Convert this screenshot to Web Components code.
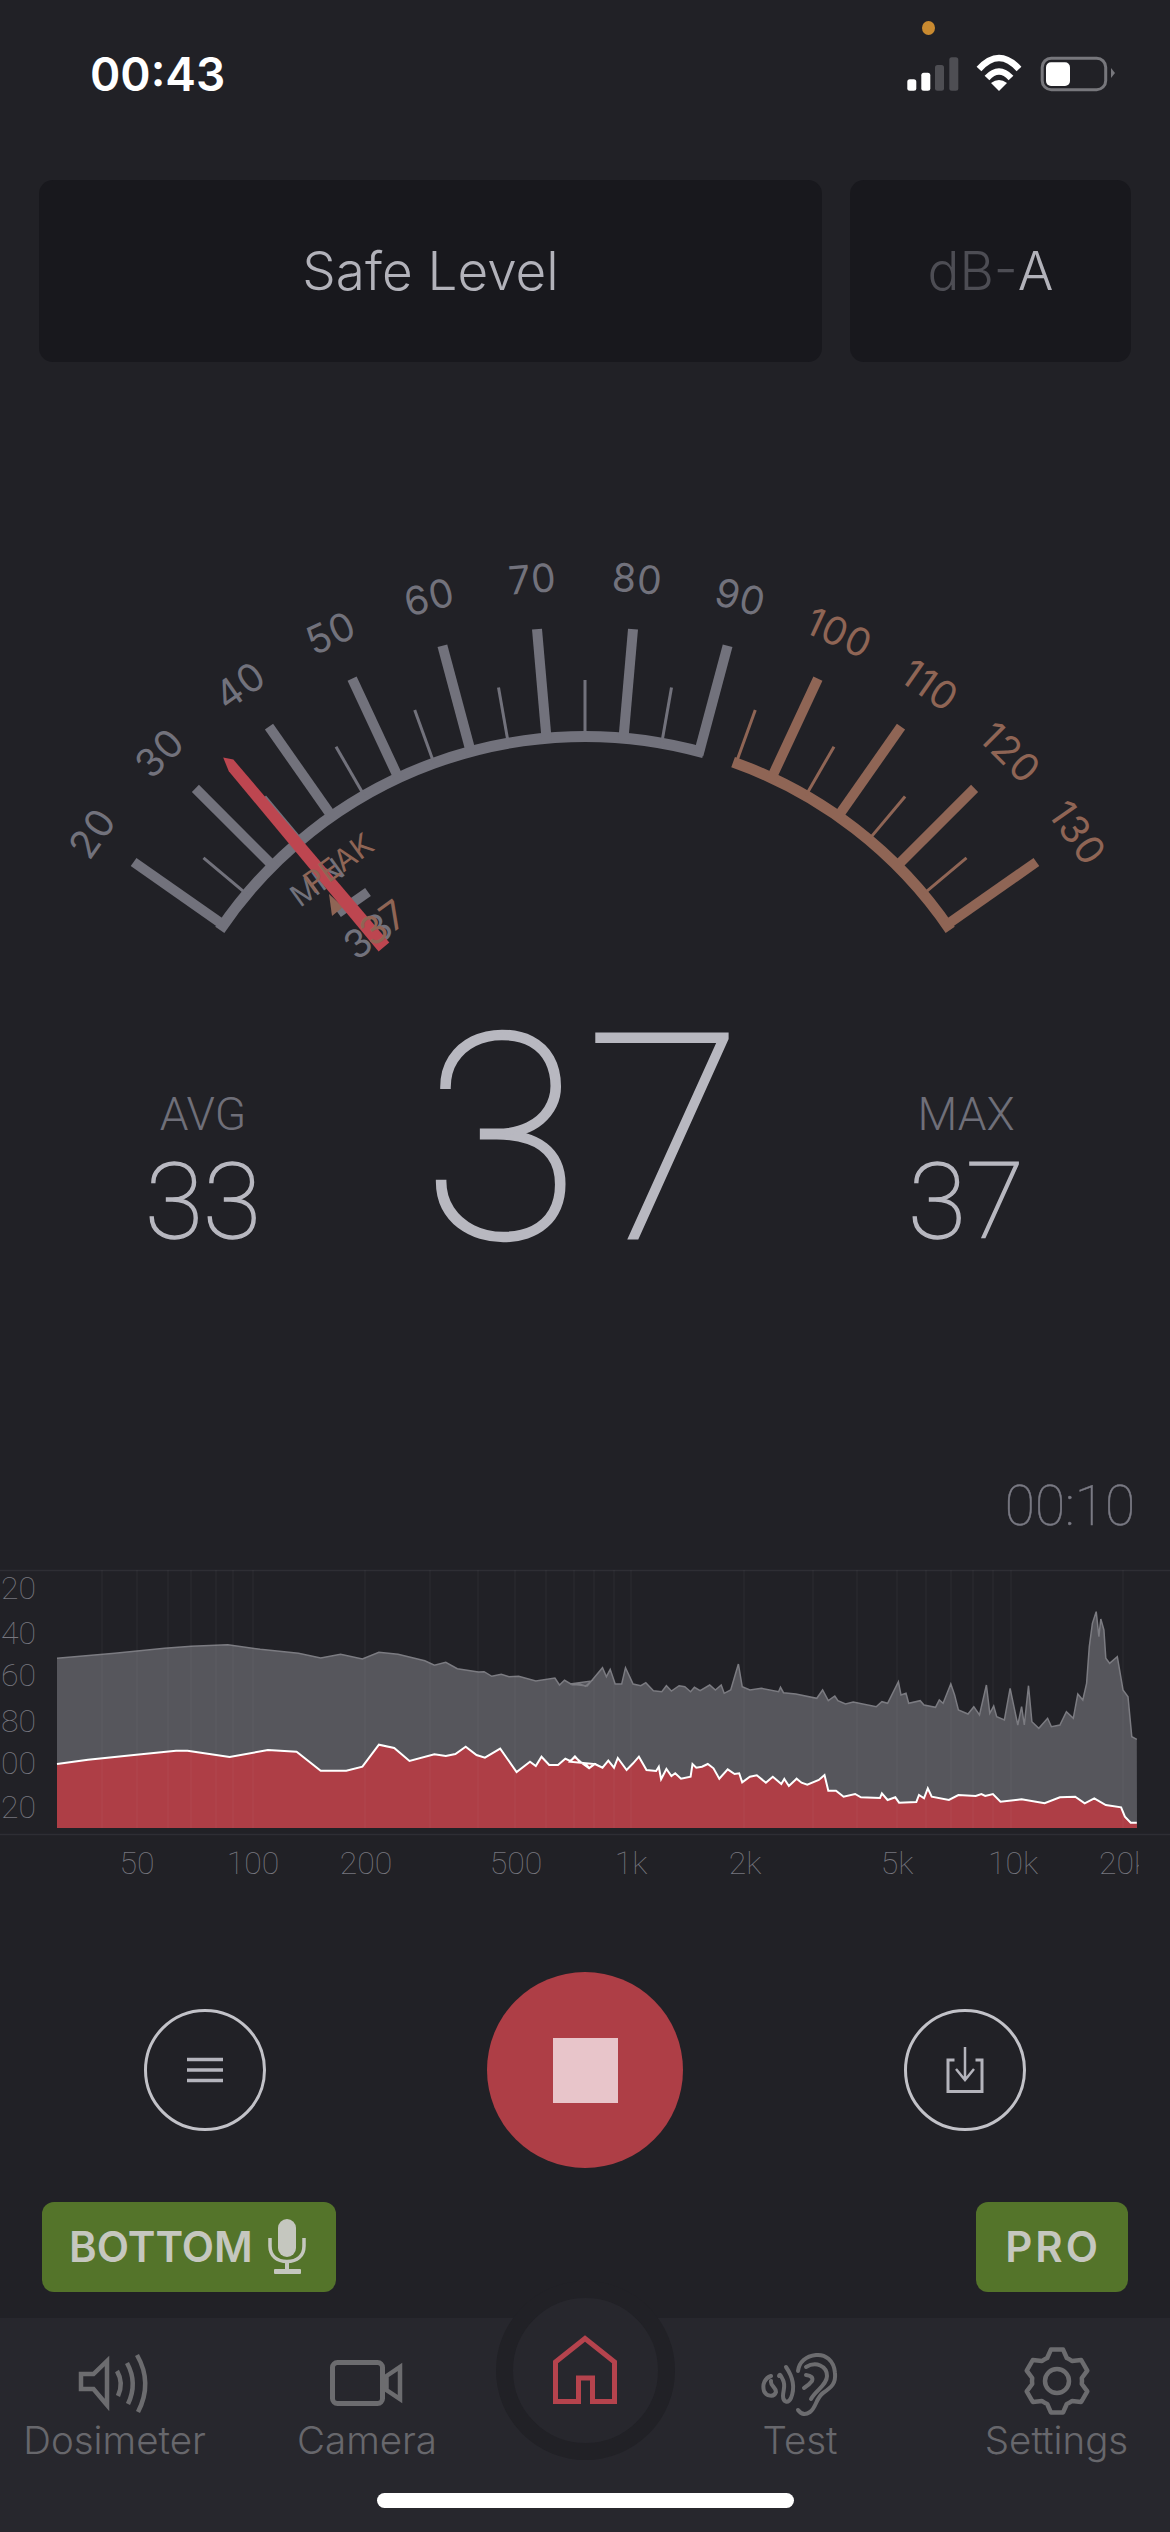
<!DOCTYPE html>
<html>
<head>
<meta charset="utf-8">
<title>Sound meter</title>
<style>
  html, body { margin: 0; padding: 0; background: #212126; }
  body { width: 1170px; height: 2532px; overflow: hidden; font-family: Inter, "Liberation Sans", sans-serif; }
  svg { display: block; }
</style>
</head>
<body>
<meter-screen>
  <status-bar time="00:43"></status-bar>

  <panel-row>
    <level-panel>Safe Level</level-panel>
    <level-panel slot="side"><span style="color:#4d4d54">dB-</span>A</level-panel>
  </panel-row>

  <gauge-dial></gauge-dial>

  <level-readout>
    <side-stat label="AVG" value="33"></side-stat>
    <big-number slot="main">37</big-number>
    <side-stat slot="end" label="MAX" value="37"></side-stat>
  </level-readout>

  <elapsed-time>00:10</elapsed-time>

  <spectrum-chart></spectrum-chart>

  <control-row>
    <round-button>
      <svg width="36" height="26" viewBox="0 0 36 26"><path d="M0 2.500H36M0 13H36M0 23.500H36" stroke="#b4b4bc" stroke-width="3.500"/></svg>
    </round-button>
    <stop-button slot="main"></stop-button>
    <round-button slot="end">
      <svg width="40" height="48" viewBox="0 0 40 48"><path d="M9.500 14H3V45.500H37V14H30.500" fill="none" stroke="#b4b4bc" stroke-width="3"/><path d="M20 1V33M11 23L20 34L29 23" fill="none" stroke="#b4b4bc" stroke-width="2.500"/></svg>
    </round-button>
  </control-row>

  <badge-row>
    <mode-badge>BOTTOM
      <svg slot="icon" width="40" height="58" viewBox="0 0 40 58"><rect x="11" y="1" width="18" height="38" rx="9" fill="#c5c7bf"/><path d="M3 20V28C3 38 10 43.500 20 43.500S37 38 37 28V20" fill="none" stroke="#c5c7bf" stroke-width="3.500"/><path d="M20 43V52" stroke="#c5c7bf" stroke-width="4"/><rect x="7" y="51" width="27" height="5" rx="1" fill="#c5c7bf"/></svg>
    </mode-badge>
    <mode-badge slot="end" style="letter-spacing:3px;padding:0 27px 0 29px">PRO</mode-badge>
  </badge-row>

  <tab-bar>
    <tab-item label="Dosimeter">
      <svg width="90" height="72" viewBox="70 2346 90 72" fill="none" stroke="#6c6c6f" stroke-width="4.500"><path d="M81 2374H93.500L107 2361V2405L93.500 2389H81Z"/><path d="M117 2371Q124 2383 118 2396"/><path d="M127 2363Q138 2383 128 2404"/><path d="M137 2355Q153 2383 138 2412"/></svg>
    </tab-item>
    <tab-item label="Camera">
      <svg width="90" height="72" viewBox="324 2346 90 72" fill="none" stroke="#6c6c6f" stroke-width="5"><rect x="334.500" y="2362.500" width="50" height="41" rx="5"/><path d="M388.500 2376L402 2367V2399L388.500 2390Z" stroke-width="4.500"/></svg>
    </tab-item>
    <home-tab></home-tab>
    <tab-item label="Test">
      <svg width="90" height="72" viewBox="757 2346 90 72" fill="none" stroke="#6c6c6f" stroke-width="4" stroke-linecap="round"><path d="M800 2410Q805 2417 812 2412C818 2408 818 2398 825 2393C834 2387 838 2383 837 2373C836 2360 827 2354 818 2355C808 2356 801 2362 800 2371"/><path d="M808 2367C818 2361 829 2366 829 2376C829 2385 818 2390 813 2399"/><path d="M808 2375Q816 2376 814 2381Q811 2385 806 2388"/><path d="M788 2367C795 2377 797 2388 793 2398C790 2404 785 2402 785 2396C785 2390 788 2386 785 2380C783 2376 782 2373 781 2376"/><path d="M773 2376C767 2378 764 2384 766 2391C768 2396 776 2398 778 2392C778 2387 772 2386 773 2381"/></svg>
    </tab-item>
    <tab-item label="Settings" style="margin-left:8px">
      <svg id="gear" width="90" height="72" viewBox="1011 2346 90 72" fill="none" stroke="#6c6c6f" stroke-width="4.500" stroke-linejoin="round"><circle cx="1056" cy="2381" r="12"/></svg>
    </tab-item>
  </tab-bar>

  <home-indicator></home-indicator>
</meter-screen>

<script>
// point on the dial, angle in degrees from straight up
function polar(cx, cy, r, deg) {
  const a = deg * Math.PI / 180;
  return [cx + r * Math.sin(a), cy - r * Math.cos(a)];
}
const fmt = (p) => p[0].toFixed(1) + ' ' + p[1].toFixed(1);

class MeterScreen extends HTMLElement {
  constructor() {
    super();
    this.attachShadow({ mode: 'open' });
    this.shadowRoot.innerHTML = `
      <style>
        :host {
          display: flex;
          flex-direction: column;
          position: relative;
          width: 1170px;
          height: 2532px;
          overflow: hidden;
          color: #b4b4bc;
        }
      </style>
      <slot></slot>
    `;
  }
}

class StatusBar extends HTMLElement {
  constructor() {
    super();
    this.attachShadow({ mode: 'open' });
    this.shadowRoot.innerHTML = `
      <style>
        :host {
          display: flex;
          position: relative;
          height: 148px;
          padding: 0 53px 0 90px;
          align-items: center;
          justify-content: space-between;
        }
        .time {
          font: 600 46px/1 Inter, "Liberation Sans", sans-serif;
          color: #fff;
        }
        .dot {
          position: absolute;
          left: 922px;
          top: 21px;
          width: 13px;
          height: 14px;
          border-radius: 50%;
          background: #c98a30;
        }
      </style>
      <span class="time">${this.getAttribute('time')}</span>
      <span class="dot"></span>
      <svg width="212" height="44" viewBox="905 52 212 44">
        <rect x="907.300" y="79.300" width="9" height="11.500" rx="2.500" fill="#fff"/>
        <rect x="921.300" y="72.700" width="9" height="18" rx="2.500" fill="#fff"/>
        <rect x="935" y="65" width="9" height="25.800" rx="2.500" fill="#4e4e53"/>
        <rect x="949.300" y="57.300" width="9" height="33.500" rx="2.500" fill="#4e4e53"/>
        <path d="M979 69Q999 47 1019 69M987 78Q999 65 1011 78" fill="none" stroke="#fff" stroke-width="6.500"/>
        <path d="M999 91L991 83Q999 77 1007 83Z" fill="#fff"/>
        <rect x="1042.200" y="58.200" width="63.500" height="31.500" rx="9" fill="none" stroke="#77777c" stroke-width="3"/>
        <rect x="1046" y="62.300" width="24" height="23.700" rx="5" fill="#fff"/>
        <path d="M1111 68L1115 73L1111 78Z" fill="#77777c"/>
      </svg>
    `;
  }
}

class PanelRow extends HTMLElement {
  constructor() {
    super();
    this.attachShadow({ mode: 'open' });
    this.shadowRoot.innerHTML = `
      <style>
        :host {
          display: grid;
          grid-template-columns: 783px 281px;
          gap: 28px;
          padding: 32px 39px 0 39px;
        }
      </style>
      <slot></slot><slot name="side"></slot>
    `;
  }
}

class LevelPanel extends HTMLElement {
  constructor() {
    super();
    this.attachShadow({ mode: 'open' });
    this.shadowRoot.innerHTML = `
      <style>
        :host {
          display: flex;
          height: 182px;
          align-items: center;
          justify-content: center;
          border-radius: 14px;
          background: #18181d;
          color: #b2b2ba;
          font: 300 53px/1 Inter, "Liberation Sans", sans-serif;
        }
      </style>
      <slot></slot>
    `;
  }
}

class GaugeDial extends HTMLElement {
  constructor() {
    super();
    const cx = 585, cy = 1178, grey = '#72727c', brown = '#8f6555';
    let marks = '';
    const arc = (from, to, colour) => {
      marks += `<path d="M${fmt(polar(cx, cy, 441.5, from))}A441.5 441.5 0 0 1 ${fmt(polar(cx, cy, 441.5, to))}" fill="none" stroke="${colour}" stroke-width="11"/>`;
    };
    arc(-55.8, 15.6, grey);
    arc(19.6, 55.8, brown);
    // major ticks and their numbers, 20..130 every 10 degrees
    for (let i = 0; i < 12; i++) {
      const deg = -55 + i * 10, value = 20 + i * 10;
      const colour = value >= 100 ? brown : grey;
      marks += `<path d="M${fmt(polar(cx, cy, 438, deg))}L${fmt(polar(cx, cy, 551, deg))}" stroke="${colour}" stroke-width="10"/>`;
      const t = polar(cx, cy, 602, deg);
      marks += `<text x="${t[0].toFixed(1)}" y="${t[1].toFixed(1)}" transform="rotate(${deg} ${t[0].toFixed(1)} ${t[1].toFixed(1)})" text-anchor="middle" dominant-baseline="central" fill="${colour}">${value}</text>`;
    }
    // minor ticks between them
    for (let deg = -50; deg <= 50; deg += 10) {
      marks += `<path d="M${fmt(polar(cx, cy, 442, deg))}L${fmt(polar(cx, cy, 498, deg))}" stroke="${deg >= 20 ? brown : grey}" stroke-width="3"/>`;
    }
    // needle
    const tip = [224, 757], dir = [0.645, 0.766], nor = [0.766, -0.645];
    const at = (t, w) => fmt([tip[0] + dir[0] * t + nor[0] * w, tip[1] + dir[1] * t + nor[1] * w]);
    const needle = [at(0, -1), at(8, 5.5), at(248, 7), at(248, -7), at(14, -5.5)].join(' ');

    this.attachShadow({ mode: 'open' });
    this.shadowRoot.innerHTML = `
      <style>
        :host { display: block; height: 638px; }
        svg { display: block; }
        text { font: 400 39px Inter, "Liberation Sans", sans-serif; letter-spacing: 1px; }
        .small { font-size: 30px; letter-spacing: 0; }
      </style>
      <svg width="1170" height="638" viewBox="0 362 1170 638">
        ${marks}
        <path d="M338 913L368 892" stroke="${grey}" stroke-width="10"/>
        <path d="M329 894L343 907L332 916Z" fill="${brown}"/>
        <text class="small" x="317" y="882" transform="rotate(-36 317 882)" text-anchor="middle" dominant-baseline="central" fill="${grey}">MIN</text>
        <text x="368" y="935" transform="rotate(-36 368 935)" text-anchor="middle" dominant-baseline="central" fill="${grey}">33</text>
        <polygon points="${needle}" fill="#bd4650"/>
        <text class="small" x="338" y="863" transform="rotate(-36 338 863)" text-anchor="middle" dominant-baseline="central" fill="${brown}">PEAK</text>
        <text x="383" y="922" transform="rotate(-36 383 922)" text-anchor="middle" dominant-baseline="central" fill="${brown}">37</text>
      </svg>
    `;
  }
}

class LevelReadout extends HTMLElement {
  constructor() {
    super();
    this.attachShadow({ mode: 'open' });
    this.shadowRoot.innerHTML = `
      <style>
        :host {
          display: grid;
          grid-template-columns: 376px 384px 382px;
          height: 280px;
          padding-left: 15px;
          align-items: end;
          justify-items: center;
        }
      </style>
      <slot></slot><slot name="main"></slot><slot name="end"></slot>
    `;
  }
}

class SideStat extends HTMLElement {
  constructor() {
    super();
    this.attachShadow({ mode: 'open' });
    this.shadowRoot.innerHTML = `
      <style>
        :host {
          display: flex;
          flex-direction: column;
          align-items: center;
          padding-bottom: 22px;
          font-family: Roboto, "Liberation Sans", sans-serif;
        }
        .label { font-weight: 300; font-size: 46px; line-height: 64px; color: #6f6f79; }
        .value { font-weight: 100; font-size: 106px; line-height: 112px; color: #b8b8c0; -webkit-text-stroke: 1.5px #b8b8c0; }
      </style>
      <span class="label">${this.getAttribute('label')}</span>
      <span class="value">${this.getAttribute('value')}</span>
    `;
  }
}

class BigNumber extends HTMLElement {
  constructor() {
    super();
    this.attachShadow({ mode: 'open' });
    this.shadowRoot.innerHTML = `
      <style>
        :host {
          display: block;
          margin-left: 6px;
          font: 100 287px/280px Roboto, "Liberation Sans", sans-serif;
          letter-spacing: 6px;
          color: #b8b8c0;
          -webkit-text-stroke: 3px #b8b8c0;
        }
      </style>
      <slot></slot>
    `;
  }
}

class ElapsedTime extends HTMLElement {
  constructor() {
    super();
    this.attachShadow({ mode: 'open' });
    this.shadowRoot.innerHTML = `
      <style>
        :host {
          display: block;
          height: 280px;
          box-sizing: border-box;
          padding: 196px 35px 0 0;
          text-align: right;
          font: 100 55px/60px Roboto, "Liberation Sans", sans-serif;
          color: #7a7a84;
          -webkit-text-stroke: 0.5px #7a7a84;
        }
      </style>
      <slot></slot>
    `;
  }
}

class SpectrumChart extends HTMLElement {
  constructor() {
    super();
    // traced from the two halves of the plot
    const greyA = [149,355,300,340,430,325,500,319,595,314,680,328,780,340,838,354,890,343,947,357,990,337,1040,343,1110,362,1135,376,1165,367,1195,386,1250,396,1265,395,1285,409,1310,403,1330,410,1355,409,1400,423,1450,414,1462,435,1475,421,1495,434,1515,432,1530,439,1545,423];
    const greyB = [0,432,45,438,85,383,95,410,105,388,118,432,135,432,145,383,165,432,185,437,198,428,218,452,240,455,252,437,265,453,285,437,300,440,315,455,325,442,340,452,365,435,380,450,395,435,403,460,420,450,440,372,450,440,470,450,500,445,545,455,550,442,558,458,590,462,645,475,660,450,675,482,692,468,700,482,720,492,740,486,800,500,815,485,830,490,858,425,865,465,878,460,885,490,915,482,925,495,955,502,965,480,975,490,995,432,1005,465,1015,510,1040,522,1055,500,1070,525,1088,435,1097,520,1107,498,1115,530,1135,540,1150,445,1170,555,1180,500,1187,555,1198,437,1207,545,1225,565,1248,535,1258,560,1280,555,1297,515,1315,535,1327,462,1340,480,1350,430,1357,320,1365,250,1375,215,1382,290,1387,237,1395,270,1400,355,1410,370,1430,350,1445,450,1458,470,1468,590,1481,598];
    const redA = [149,672,230,659,350,645,460,632,490,632,600,651,700,630,775,635,838,692,905,692,947,680,990,614,1030,624,1070,663,1135,643,1165,648,1190,642,1217,620,1245,645,1267,653,1307,626,1350,696,1385,665,1400,678,1415,650,1435,675,1458,675,1477,656,1490,663,1503,650,1515,666,1530,672,1540,684,1552,672];
    const redB = [0,665,12,650,30,668,50,685,65,672,85,683,100,662,115,683,125,654,148,690,165,670,180,650,200,690,225,693,232,680,238,718,252,687,265,708,275,700,290,716,315,710,320,672,330,683,345,680,360,672,375,685,390,716,412,688,430,702,442,700,450,727,470,710,488,706,512,728,530,710,552,732,560,717,572,738,592,716,605,728,620,734,650,720,665,705,675,752,695,752,715,770,745,762,760,772,810,774,815,760,830,780,850,772,860,788,905,786,912,765,925,775,935,745,945,770,990,780,1015,765,1060,768,1075,762,1085,768,1105,762,1125,785,1180,778,1240,790,1280,772,1320,770,1345,790,1370,775,1400,795,1440,802,1450,830,1465,848,1481,848];
    const trace = (a, b) => {
      const pts = [];
      for (let i = 0; i < a.length; i += 2) pts.push((a[i] / 2.613).toFixed(1) + ' ' + (1540 + a[i + 1] / 3).toFixed(1));
      for (let i = 0; i < b.length; i += 2) pts.push((570 + b[i] / 2.613).toFixed(1) + ' ' + (1540 + b[i + 1] / 3).toFixed(1));
      return pts.join(' L');
    };
    const grey = trace(greyA, greyB), red = trace(redA, redB);
    const gridX = [102,137,168,191,216,233,253,365,430,478,515,546,574,594,614,631,744,813,857,897,926,951,973,993,1011,1123];
    const grid = gridX.map((x) => `M${x} 1570V1828`).join('');
    const yLabels = [['20', 1588], ['40', 1633], ['60', 1675], ['80', 1721], ['00', 1763], ['20', 1807]];
    const xLabels = [['50', 137], ['100', 253], ['200', 366], ['500', 516], ['1k', 631], ['2k', 745], ['5k', 897], ['10k', 1013]];

    this.attachShadow({ mode: 'open' });
    this.shadowRoot.innerHTML = `
      <style>
        :host { display: block; height: 330px; }
        svg { display: block; }
        text { font: 100 32px Roboto, "Liberation Sans", sans-serif; fill: #77777f; }
      </style>
      <svg width="1170" height="330" viewBox="0 1560 1170 330">
        <defs><clipPath id="cut"><rect x="0" y="1840" width="1139" height="50"/></clipPath></defs>
        <path d="M0 1570.500H1170M0 1834.500H1170" stroke="#2e2e34" stroke-width="1.500"/>
        <path d="M${grey}L1137 1828L57 1828Z" fill="#56565c"/>
        <path d="M${grey}" fill="none" stroke="#7b7b81" stroke-width="1.500"/>
        <path d="M${red}L1137 1828L57 1828Z" fill="#ae3e46"/>
        <path d="M${red}" fill="none" stroke="#fff" stroke-width="2"/>
        <path d="${grid}" stroke="#fff" stroke-opacity="0.022" stroke-width="2"/>
        ${yLabels.map(([t, y]) => `<text x="36" y="${y}" text-anchor="end" dominant-baseline="central">${t}</text>`).join('')}
        ${xLabels.map(([t, x]) => `<text x="${x}" y="1863" text-anchor="middle" dominant-baseline="central">${t}</text>`).join('')}
        <text x="1124" y="1863" text-anchor="middle" dominant-baseline="central" clip-path="url(#cut)">20k</text>
      </svg>
    `;
  }
}

class ControlRow extends HTMLElement {
  constructor() {
    super();
    this.attachShadow({ mode: 'open' });
    this.shadowRoot.innerHTML = `
      <style>
        :host {
          display: grid;
          box-sizing: border-box;
          grid-template-columns: repeat(3, 380px);
          height: 312px;
          padding: 48px 0 0 15px;
          align-items: center;
          justify-items: center;
        }
      </style>
      <slot></slot><slot name="main"></slot><slot name="end"></slot>
    `;
  }
}

class RoundButton extends HTMLElement {
  constructor() {
    super();
    this.attachShadow({ mode: 'open' });
    this.shadowRoot.innerHTML = `
      <style>
        :host {
          display: flex;
          box-sizing: border-box;
          width: 122px;
          height: 122px;
          border: 3px solid #c2c2c8;
          border-radius: 50%;
          align-items: center;
          justify-content: center;
        }
      </style>
      <slot></slot>
    `;
  }
}

class StopButton extends HTMLElement {
  constructor() {
    super();
    this.attachShadow({ mode: 'open' });
    this.shadowRoot.innerHTML = `
      <style>
        :host {
          display: flex;
          width: 196px;
          height: 196px;
          border-radius: 50%;
          background: #ae3e46;
          align-items: center;
          justify-content: center;
        }
        span { width: 65px; height: 65px; background: #e8c5ca; }
      </style>
      <span></span>
    `;
  }
}

class BadgeRow extends HTMLElement {
  constructor() {
    super();
    this.attachShadow({ mode: 'open' });
    this.shadowRoot.innerHTML = `
      <style>
        :host {
          display: flex;
          justify-content: space-between;
          padding: 0 42px;
        }
      </style>
      <slot></slot><slot name="end"></slot>
    `;
  }
}

class ModeBadge extends HTMLElement {
  constructor() {
    super();
    this.attachShadow({ mode: 'open' });
    this.shadowRoot.innerHTML = `
      <style>
        :host {
          display: flex;
          height: 90px;
          padding: 0 29px 0 27px;
          gap: 14px;
          align-items: center;
          border-radius: 12px;
          background: #54742a;
          color: #c5c7bf;
          font: 600 42px/1 Inter, "Liberation Sans", sans-serif;
        }
      </style>
      <slot></slot><slot name="icon"></slot>
    `;
  }
}

class TabBar extends HTMLElement {
  constructor() {
    super();
    this.attachShadow({ mode: 'open' });
    this.shadowRoot.innerHTML = `
      <style>
        :host {
          display: grid;
          grid-template-columns: 229px 276px 160px 270px 235px;
          height: 214px;
          margin-top: 26px;
          box-sizing: border-box;
          background: #27272d;
          justify-items: center;
          align-items: start;
        }
      </style>
      <slot></slot>
    `;
  }
}

class TabItem extends HTMLElement {
  constructor() {
    super();
    this.attachShadow({ mode: 'open' });
    this.shadowRoot.innerHTML = `
      <style>
        :host {
          display: flex;
          flex-direction: column;
          align-items: center;
          padding-top: 28px;
          color: #67676c;
          font: 300 38.5px/50px Inter, "Liberation Sans", sans-serif;
        }
        span { margin-top: -3px; }
      </style>
      <slot></slot>
      <span>${this.getAttribute('label')}</span>
    `;
  }
}

// ring that sticks up over the top edge of the tab bar
class HomeTab extends HTMLElement {
  constructor() {
    super();
    this.attachShadow({ mode: 'open' });
    this.shadowRoot.innerHTML = `
      <style>
        :host { display: block; position: relative; width: 160px; height: 100px; }
        .ring {
          position: absolute;
          left: -9.500px;
          top: -37px;
          display: flex;
          box-sizing: border-box;
          width: 179px;
          height: 179px;
          border: 17.500px solid #212126;
          border-radius: 50%;
          background: #27272d;
          align-items: center;
          justify-content: center;
        }
      </style>
      <div class="ring">
        <svg width="70" height="74" viewBox="550 2335 70 74" fill="none" stroke="#b5434d" stroke-width="5"><path d="M555.500 2402.500V2363L585 2339.500L614.500 2363V2402.500H592.500V2379H578.500V2402.500Z"/></svg>
      </div>
    `;
  }
}

class HomeIndicator extends HTMLElement {
  constructor() {
    super();
    this.attachShadow({ mode: 'open' });
    this.shadowRoot.innerHTML = `
      <style>
        :host {
          display: block;
          position: absolute;
          left: 377px;
          top: 2493px;
          width: 417px;
          height: 15px;
          border-radius: 8px;
          background: #fff;
        }
      </style>
    `;
  }
}

customElements.define('meter-screen', MeterScreen);
customElements.define('status-bar', StatusBar);
customElements.define('panel-row', PanelRow);
customElements.define('level-panel', LevelPanel);
customElements.define('gauge-dial', GaugeDial);
customElements.define('level-readout', LevelReadout);
customElements.define('side-stat', SideStat);
customElements.define('big-number', BigNumber);
customElements.define('elapsed-time', ElapsedTime);
customElements.define('spectrum-chart', SpectrumChart);
customElements.define('control-row', ControlRow);
customElements.define('round-button', RoundButton);
customElements.define('stop-button', StopButton);
customElements.define('badge-row', BadgeRow);
customElements.define('mode-badge', ModeBadge);
customElements.define('tab-bar', TabBar);
customElements.define('tab-item', TabItem);
customElements.define('home-tab', HomeTab);
customElements.define('home-indicator', HomeIndicator);

// six-toothed gear outline for the Settings tab
const gear = document.getElementById('gear');
let d = '';
for (let i = 0; i < 6; i++) {
  const a = i * 60;
  const pts = [polar(1056, 2381, 25, a - 23), polar(1056, 2381, 32, a - 11), polar(1056, 2381, 32, a + 11), polar(1056, 2381, 25, a + 23)];
  d += (i ? 'A25 25 0 0 1 ' : 'M') + fmt(pts[0]) + 'L' + fmt(pts[1]) + 'L' + fmt(pts[2]) + 'L' + fmt(pts[3]);
}
d += 'A25 25 0 0 1 ' + fmt(polar(1056, 2381, 25, -23)) + 'Z';
gear.insertAdjacentHTML('beforeend', `<path d="${d}"/>`);
</script>
</body>
</html>
